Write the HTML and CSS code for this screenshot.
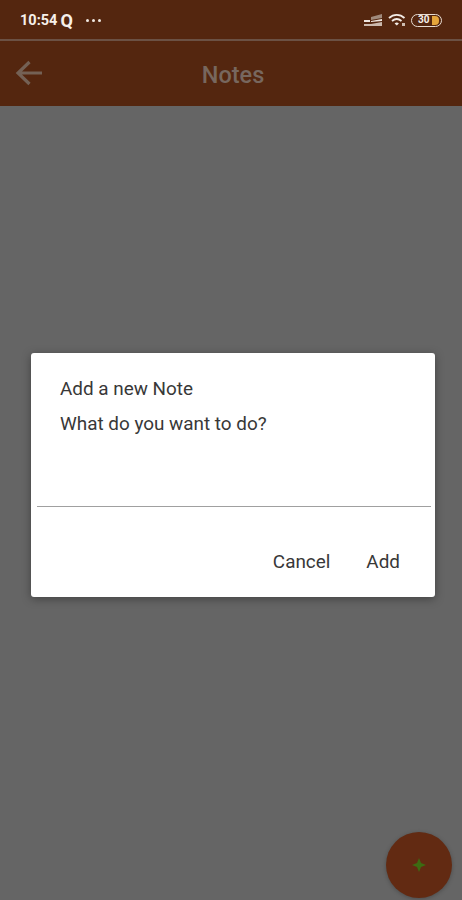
FILE: index.html
```html
<!DOCTYPE html>
<html lang="en">
<head>
<meta charset="utf-8">
<title>Notes</title>
<link rel="stylesheet" href="styles.css">
</head>
<body>
<div class="screen">
  <header class="top">
    <div class="status">
      <div class="status-left">
        <span class="time">10:54</span>
        <span class="q">Q</span>
        <span class="dots"><i></i><i></i><i></i></span>
      </div>
      <div class="status-right">
        <svg class="signal" width="19" height="13" viewBox="0 0 19 13">
          <path d="M7 3 L18 0 V4 L7 6 Z" fill="#a08a7c"/>
          <path d="M0 6 L6 6 V8 H0 Z" fill="#efe6df"/>
          <path d="M7 7 L18 5 V7 L7 8 Z" fill="#efe6df"/>
          <path d="M0 12 H18 V8 L7 10 V10 H0 Z" fill="#cbb9ad"/>
        </svg>
        <svg class="wifi" width="18" height="14" viewBox="0 0 18 14">
          <path d="M1 5 C5.5 0.8 12 0.8 16.5 5" fill="none" stroke="#f3ece6" stroke-width="1.8"/>
          <path d="M4 8 C7 5.4 10.5 5.4 13.5 8" fill="none" stroke="#f3ece6" stroke-width="1.8"/>
          <path d="M6.6 10.4 C8 9.2 9.5 9.2 10.9 10.4 L8.8 12.6 Z" fill="#f3ece6"/>
          <rect x="14" y="10" width="3" height="3" fill="#cdbdb1"/>
        </svg>
        <div class="battery"><span class="battery-level">30</span><span class="battery-fill"></span></div>
      </div>
    </div>
    <div class="appbar">
      <svg class="back" width="28" height="26" viewBox="0 0 28 26">
        <path d="M14.5 2 L3 13 L14.5 24 M3 13 H27" fill="none" stroke="#746155" stroke-width="3.2"/>
      </svg>
      <h1 class="title">Notes</h1>
    </div>
  </header>
  <main class="content"></main>

  <section class="dialog">
    <h2 class="dialog-title">Add a new Note</h2>
    <div class="field">What do you want to do?</div>
    <div class="actions">
      <span class="action">Cancel</span>
      <span class="action">Add</span>
    </div>
  </section>

  <div class="fab">
    <svg width="16" height="16" viewBox="0 0 16 16"><path d="M8 1 L10 6 L15 8 L10 10 L8 15 L6 10 L1 8 L6 6 Z" fill="#3d6b12"/></svg>
  </div>
</div>
</body>
</html>
```
FILE: styles.css
```css
* { box-sizing: border-box; }
html, body { margin: 0; padding: 0; }
body { font-family: Roboto, "Liberation Sans", sans-serif; background: #656565; }
.screen { position: relative; width: 462px; height: 900px; overflow: hidden; display: flex; flex-direction: column; background: #656565; }
.top { background: #54260f; height: 106px; flex: none; }
.status { height: 41px; display: flex; justify-content: space-between; align-items: center; padding: 1px 20px 0; border-bottom: 2px solid #6b5144; color: #f6f0ea; }
.status-left { display: flex; align-items: center; }
.time { font-size: 14.5px; font-weight: 700; }
.q { font-size: 18px; font-weight: 700; margin-left: 3px; }
.dots { display: flex; gap: 3px; margin-left: 13px; }
.dots i { width: 3px; height: 3px; border-radius: 50%; background: #f0e8e2; }
.status-right { display: flex; align-items: center; gap: 5px; }
.battery { position: relative; width: 31px; height: 13px; border: 1.5px solid #e8dcd2; border-radius: 7px; display: flex; align-items: center; padding-left: 6px; overflow: hidden; }
.battery-level { font-size: 10px; font-weight: 700; line-height: 1; color: #f6f0ea; }
.battery-fill { position: absolute; right: 2px; top: 1px; bottom: 1px; width: 7px; border-radius: 0 4px 4px 0; background: #e6a63c; }
.appbar { position: relative; height: 65px; display: flex; align-items: center; justify-content: center; padding: 2px 0 0 4px; }
.back { position: absolute; left: 15px; top: 19px; }
.title { margin: 0; font-size: 23.5px; font-weight: 500; color: #77675e; }
.content { flex: 1; }
.dialog { position: absolute; left: 31px; top: 353px; width: 404px; height: 244px; background: #fff; border-radius: 3px; box-shadow: 0 2px 10px rgba(0,0,0,.35); padding: 25px 4px 0 6px; display: flex; flex-direction: column; color: #383838; }
.dialog-title { margin: 0 0 0 23px; font-size: 18.9px; font-weight: 400; line-height: 21px; }
.field { margin-top: 14px; padding: 0 0 0 23px; font-size: 18.9px; line-height: 21px; border-bottom: 1.5px solid #a0a0a0; height: 94px; }
.actions { display: flex; justify-content: flex-end; gap: 36px; padding: 44px 31px 0 0; }
.action { font-size: 18.9px; line-height: 21px; }
.fab { position: absolute; left: 386px; top: 832px; width: 66px; height: 66px; border-radius: 50%; background: #622a12; display: flex; align-items: center; justify-content: center; box-shadow: 0 1px 4px rgba(0,0,0,.25); }
```
